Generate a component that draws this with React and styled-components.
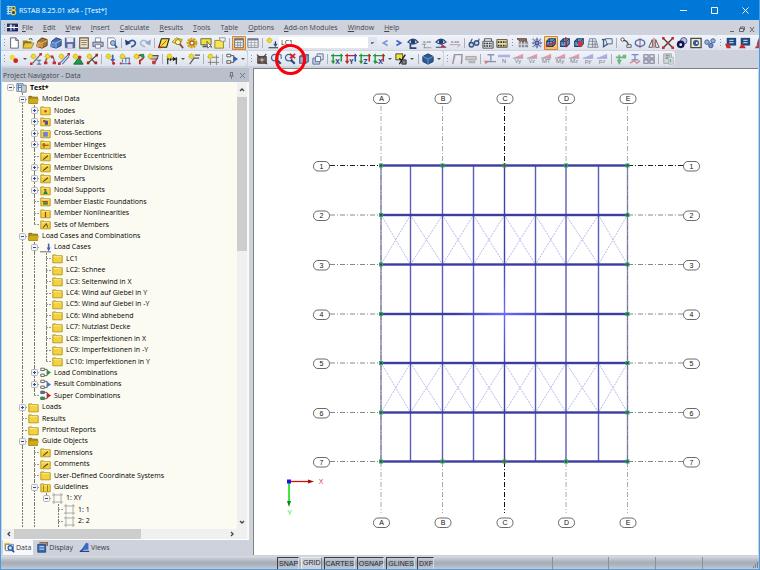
import React, {useState} from 'react'
import styled, { createGlobalStyle } from "styled-components";

const GlobalStyle = createGlobalStyle`
  *{
    padding:0;
    margin:0;
    box-sizing:border-box;
  }
  body{
    font-family:"Open Sans", "Noto Sans", sans-serif;
    font-size:7px;
    color:#1c1c1c;
  }
  button, input, select{
    font:inherit;
    color:inherit;
    border:0;
    background:none;
  }
  svg{
    display:block;
  }
`;

const Frame = styled.div`
  height:100vh;
  display:flex;
  flex-direction:column;
  background:#cdd2dc;
  border:1px solid #4b9be0;
  border-top:0;
  overflow:hidden;
`
const TitleBar = styled.header`
  height:20px;
  flex:none;
  margin:0 -1px;
  padding-left:6px;
  display:flex;
  align-items:center;
  gap:2px;
  background:#0078d7;
  color:#fff;
`
const Title = styled.h1`
  flex:1;
  font-size:7px;
  font-weight:400;
`
const WindowButton = styled.button`
  width:29px;
  height:20px;
  display:flex;
  align-items:center;
  justify-content:center;
`
const MenuBar = styled.nav`
  height:15px;
  flex:none;
  display:flex;
  align-items:center;
  padding-right:2px;
`
const MenuItems = styled.ul`
  flex:1;
  display:flex;
  gap:10px;
  padding-left:4px;
  list-style:none;
`
const MenuButton = styled.button`
  display:block;
  color:#44464e;
  line-height:10px;
`
const MdiButton = styled.button`
  width:10px;
  height:10px;
  display:flex;
  align-items:flex-end;
  justify-content:center;
`
const ToolRow = styled.div`
  height:16px;
  flex:none;
  display:flex;
  gap:${props => props.$gap || 0}px;
`
const ToolStrip = styled.div`
  flex:none;
  height:15px;
  display:flex;
  align-items:center;
  background:linear-gradient(#f1f4fa, #dde2ec);
  border-radius:0 3px 3px 0;
`
const Grip = styled.span`
  width:${props => props.$wide ? 6 : 7}px;
  height:11px;
  background:radial-gradient(circle, #8f96a8 1px, transparent 1px) center / 3px 3px;
  background-repeat:repeat-y;
`
const Separator = styled.span`
  width:1px;
  height:10px;
  margin:0 2px;
  background:#a9afbd;
`
const ToolButton = styled.button`
  position:relative;
  width:14px;
  height:14px;
  display:flex;
  align-items:center;
  justify-content:center;
  border-radius:1px;
  opacity:${props => props.$dim ? 0.65 : 1};
  background:${props => props.$on ? "linear-gradient(#ffd79b, #ffb65c)" : "none"};
  box-shadow:${props => props.$on ? "inset 0 0 0 1px #c78a45" : "none"};
`
const Highlight = styled.span`
  position:absolute;
  z-index:2;
  top:-8px;
  left:-8px;
  width:31px;
  height:31px;
  border:3px solid #fb0007;
  border-radius:50%;
`
const DropButton = styled.button`
  width:8px;
  height:14px;
  display:flex;
  align-items:center;
  justify-content:center;
`
const CaseSelect = styled.select`
  width:98px;
  height:11px;
  margin-right:1px;
  padding-left:2px;
  appearance:none;
  font-size:7px;
  line-height:11px;
  color:#222;
  background:
    conic-gradient(from 315deg at 50% 100%, #777 0 90deg, transparent 0) right 3px center / 4px 2px no-repeat,
    linear-gradient(#dfe4ee, #dfe4ee) right / 9px 11px no-repeat,
    #fff;
`
const Body = styled.main`
  flex:1;
  min-height:0;
  display:flex;
  gap:3px;
`
const Dock = styled.aside`
  width:249px;
  flex:none;
  display:flex;
  flex-direction:column;
`
const DockHeader = styled.div`
  height:14px;
  flex:none;
  margin:1px 1px 0;
  padding:0 2px 0 1px;
  display:flex;
  align-items:center;
  gap:2px;
  background:#b9c0cc;
`
const DockTitle = styled.h2`
  flex:1;
  font-size:7px;
  font-weight:400;
  color:#41434c;
`
const DockButton = styled.button`
  width:9px;
  height:9px;
`
const TreePane = styled.div`
  flex:1;
  min-height:0;
  margin:0 1px;
  display:grid;
  grid-template-columns:minmax(0, 1fr) 10px;
  grid-template-rows:minmax(0, 1fr) 10px;
  padding:0 2px 0 1px;
  background:#fcfbf2;
  border-bottom:1px solid #fff;
`
const Tree = styled.ul`
  display:grid;
  grid-auto-rows:minmax(0, 1fr);
  padding:0 0 2px 1px;
  list-style:none;
  overflow:hidden;
  color:#000;
`
const TreeRow = styled.li`
  display:flex;
  align-items:center;
  white-space:nowrap;
  min-height:0;
`
const dashes = "repeating-linear-gradient(#777 0 2px, transparent 2px 3px)"
const hyphens = "repeating-linear-gradient(90deg, #999 0 2px, transparent 2px 3px)"
const Guide = styled.span`
  width:12px;
  align-self:stretch;
  display:flex;
  align-items:center;
  justify-content:center;
  background:
    ${dashes} 6px 0 / 1px ${props => props.$line} no-repeat,
    ${hyphens} 100% 50% / ${props => props.$branch ? 6 : 0}px 1px no-repeat;
`
const Toggle = styled.button`
  width:7px;
  height:7px;
  margin-left:1px;
  flex:none;
  display:flex;
  align-items:center;
  justify-content:center;
`
const TreeLabel = styled.span`
  padding-left:3px;
  line-height:10px;
  font-weight:${props => props.$strong ? 700 : 400};
`
const ScrollTrack = styled.div`
  display:flex;
  flex-direction:${props => props.$across ? "row" : "column"};
  background:#f0f0f0;
`
const ScrollArrow = styled.button`
  width:${props => props.$across ? 11 : 10}px;
  height:${props => props.$across ? 10 : 15}px;
  flex:none;
  display:flex;
  align-items:center;
  justify-content:center;
`
const ScrollRoom = styled.div`
  flex:1;
  min-height:0;
`
const ScrollThumb = styled.div`
  width:${props => props.$across ? "60%" : "100%"};
  height:${props => props.$across ? "100%" : "37%"};
  background:#cdcdcd;
`
const ScrollCorner = styled.div`
  background:#f0f0f0;
`
const DockTabs = styled.div`
  height:16px;
  flex:none;
  padding:0 0 1px 2px;
  display:flex;
  gap:3px;
`
const DockTab = styled.button`
  height:15px;
  padding:0 2px 0 1px;
  display:flex;
  align-items:center;
  gap:1px;
  color:#383a42;
  background:${props => props.$on ? "#f6f8fb" : "none"};
`
const Viewport = styled.section`
  flex:1;
  min-width:0;
  margin:1px 1px 1px 0;
  background:#fff;
  border-top:1px solid #808080;
  border-left:1px solid #808080;
`
const Drawing = styled.svg`
  width:100%;
  height:100%;
  font-family:"Liberation Sans", sans-serif;
  font-size:7px;
`
const StatusBar = styled.footer`
  height:13px;
  flex:none;
  display:flex;
  justify-content:space-between;
  padding-left:276px;
  background:linear-gradient(#d9dce2, #aab1bb 45%, #a7aeb9 60%, #c4c9d1);
  font-family:"Liberation Sans", sans-serif;
`
const SnapGroup = styled.div`
  display:flex;
  gap:2px;
  padding-top:1px;
`
const SnapButton = styled.button`
  padding:0 0 ${props => props.$on ? 2 : 0}px 1px;
  color:#262b36;
  border:1px solid ${props => props.$on ? "#e9ecf1" : "#3a3d45"};
  border-right-color:${props => props.$on ? "#80858f" : "#d8dce2"};
  border-bottom:0;
  background:${props => props.$on ? "#ccd0d7" : "none"};
`
const StatusCells = styled.div`
  display:flex;
`
const StatusCell = styled.div`
  width:${props => props.$w}px;
  margin-top:1px;
  border-left:1px solid #8b9099;
  display:flex;
  align-items:flex-end;
  justify-content:flex-end;
`

const folder = (
  <>
    <path d="M1 2.500h4l1 1h7v9H1z" fill="#f3d23c" stroke="#a98718" />
    <path d="M2 4.700h10" stroke="#fff3a0" />
  </>
)
const sun = (
  <>
    <path d="M4 0v8M0 4h8M1.500 1.500l5 5M6.500 1.500l-5 5" stroke="#e8d64a" />
    <circle cx="4" cy="4" r="2.500" fill="#f0de25" stroke="#b5a51c" strokeWidth=".6" />
  </>
)
const eye = (
  <>
    <path d="M1 6Q7 -1 13 6Q7 10.500 1 6z" fill="#cfe0f6" stroke="#29446f" strokeWidth="1.300" />
    <circle cx="7" cy="5.500" r="2.600" fill="#1d3c70" />
  </>
)
const bluebox = (
  <>
    <path d="M2 5l3-3h7v6l-3 3H2z" fill="#6d9fd0" stroke="#173d69" strokeWidth="1.300" />
    <path d="M2 5h7v6M9 5l3-3M5 2v6" stroke="#173d69" fill="none" />
  </>
)
const lens = (
  <>
    <circle cx="5.500" cy="5.500" r="3.800" fill="#dce9fa" stroke="#46659c" strokeWidth="1.500" />
    <path d="M8.200 8.200l4.300 4.300" stroke="#2c4478" strokeWidth="2.500" />
  </>
)
const diagram = (name, color) => (
  <>
    <path d="M1 6L13 1v5z" fill={color} />
    <path d="M1 6h12" stroke="#6f75a8" />
    <text x="7" y="12" fontSize="7" textAnchor="middle" fill="#33353f">{name}</text>
  </>
)
const axis = (name, left, right) => (
  <>
    <path d="M2.500 1v9M0 3h14" stroke={left} strokeWidth="1.600" />
    <path d="M12 1v9" stroke={right} strokeWidth="1.800" />
    <path d="M0 9h5l-2.500 4z" fill={left} />
    <text x="7.500" y="12.500" fontSize="8" fontWeight="700" textAnchor="middle" fill="#24427e">{name}</text>
  </>
)
const combo = (color, box) => (
  <>
    <path d="M1 1.500h4.500v3H1zM1 9h4.500v3H1z" fill={box} stroke="#444" />
    <path d="M6 3h3v8H6M9 7h2" fill="none" stroke="#444" />
    <path d="M9 3.500v7l5-3.500z" fill={color} />
  </>
)
const crate = (front, side, light, line) => (
  <>
    <path d="M2 5l5-4 6 2v7l-6 3-6-2z" fill={side} stroke={line} />
    <path d="M2 6l5 1.500V13M7 7l6-3" stroke={light} fill="none" />
    <path d="M1 7h5v5H1z" fill={front} />
  </>
)

const icons = {
  app: (
    <>
      <path d="M1 2h9M1 5h7M1 8h7M1 11h9M3 1v11" stroke="#bcd6ee" strokeWidth="1.600" />
      <circle cx="9.500" cy="4" r="2.200" fill="#0b4d86" stroke="#f7c948" strokeWidth="1.600" />
      <circle cx="9.500" cy="9.500" r="2.800" fill="#0b4d86" stroke="#f7c948" strokeWidth="1.600" />
    </>
  ),
  model: (
    <>
      <path d="M0 2h14v10H0z" fill="#1f2a66" />
      <path d="M0 7h14M5 3v8M9 4v6M3 5h4" stroke="#fff" strokeWidth="1.300" />
    </>
  ),
  page: <path d="M3 1h6l3 3v9H3zM9 1v3h3" fill="#fff" stroke="#555" />,
  open: (
    <>
      <path d="M1 4h5l1 1h4v7H1z" fill="#9a7d16" />
      <path d="M3 7h11l-3 6H1z" fill="#e8c63e" stroke="#77600e" strokeWidth=".7" />
      <path d="M8 3q3-3 4 1" fill="none" stroke="#39853c" strokeWidth="1.300" />
    </>
  ),
  boxBrown: crate("#d99b40", "#a8752f", "#f1c77f", "#4a3316"),
  boxBlue: crate("#5e88d4", "#476fb8", "#b6ccf1", "#1d315e"),
  save: <><path d="M1 1h12v12H2l-1-1z" fill="#56659c" /><path d="M3 1h8v5H3z" fill="#e6eaf4" /><path d="M4 8h6v5H4z" fill="#cfd5e4" /></>,
  report: <><path d="M2 1h10v12H2z" fill="#f1e6cf" stroke="#6a5a42" strokeWidth="1.300" /><path d="M3 4h8M4 6.500h6M4 9h6" stroke="#7b6a53" /></>,
  print: <><path d="M4 1h6v5H4z" fill="#fff" stroke="#8088a0" /><path d="M1 6h12v5H1z" fill="#b2b8ca" stroke="#555c76" /><path d="M4 9h6v4H4z" fill="#fff" stroke="#777e95" /></>,
  preview: <><path d="M2 1h7l2 2v10H2z" fill="#fff" stroke="#777e95" /><circle cx="8" cy="7" r="2.800" fill="#9cc1ec" stroke="#36588f" /><path d="M10 9l3 3.500" stroke="#36588f" strokeWidth="2" /></>,
  undo: <><path d="M4 6q5-4 8 0q1 4-5 5.500" fill="none" stroke="#3b5a96" strokeWidth="2" /><path d="M0 3l1 7 6-3z" fill="#243f78" /></>,
  redo: <><path d="M10 6q-5-4-8 0q-1 4 5 5.500" fill="none" stroke="#a9bbd4" strokeWidth="2" /><path d="M14 3l-1 7-6-3z" fill="#8fa5c3" /></>,
  plane: <><path d="M4 2h9l-3 10H1z" fill="#f4e23a" stroke="#222" strokeWidth="1.300" /><path d="M4 10l6-6" stroke="#c22" /><path d="M0 11h4v2H0z" fill="#c22" /></>,
  find: <><path d="M0 6l5-5 7 2-3 6z" fill="#f4e23a" stroke="#9a851e" /><circle cx="7" cy="6" r="3" fill="#fff6b0" stroke="#7d6b1c" /><path d="M9 8l4 5" stroke="#8d4a37" strokeWidth="2" /></>,
  gear: <><circle cx="7" cy="7" r="5" fill="#f6e13b" stroke="#c4a512" strokeWidth="2.500" strokeDasharray="2.500 1" /><circle cx="7" cy="7" r="2.500" fill="#fff" stroke="#b13a2a" strokeWidth="1.300" /></>,
  screen: <><path d="M1 2h12v7H1z" fill="#f4e23a" stroke="#5c5c4c" /><path d="M8 5l1 8 2-2 3 1z" fill="#fff" stroke="#333" strokeWidth=".8" /><path d="M3 11h5" stroke="#555" strokeWidth="2" /></>,
  note: <><path d="M1 4h10v9H1z" fill="#f6e45a" stroke="#8e7c22" /><path d="M6 1h7v4H8z" fill="#fffbe0" stroke="#8088a0" /></>,
  table: <><path d="M2 1.500h10v11H2z" fill="#f6f7fa" stroke="#555" /><path d="M2 3h10" stroke="#6e7484" strokeWidth="2" /><path d="M3 6.500h8M3 9.500h8M5.500 5v7M8.500 5v7" stroke="#888" /></>,
  grid: <><path d="M1 2h12v10H1z" fill="#fbfbfd" stroke="#6f7484" /><path d="M1 3h12" stroke="#747a90" strokeWidth="2" /><path d="M1 6.500h12M1 9.500h12M5 4v8M9 4v8" stroke="#9aa0ae" /></>,
  load: <>{sun}<path d="M3 12.500h11M11 5v4" stroke="#333" strokeWidth="1.300" /><path d="M8.500 8h5L11 12z" fill="#264fae" /></>,
  prev: <path d="M10 4L5 7l5 3" fill="none" stroke="#7f9ad2" strokeWidth="2" />,
  next: <path d="M4 4l5 3-5 3" fill="none" stroke="#3f68c4" strokeWidth="2" />,
  eyePage: <>{eye}<path d="M4 8v5h7" stroke="#29446f" strokeWidth="2" fill="none" /></>,
  values: <><text x="7" y="7" fontSize="5" textAnchor="middle" fill="#444">x.xx</text><path d="M4 8v5M1 8.500h5M3 12.500h9" stroke="#8b90a0" /></>,
  eyeRed: <>{eye}<path d="M1 12h12" stroke="#4769ad" strokeWidth="1.500" /><path d="M8 8l5 4H7z" fill="#d23232" /></>,
  valuesRed: <><text x="7" y="7" fontSize="5" textAnchor="middle" fill="#444">x.xx</text><path d="M1 9h12l-3 3" stroke="#b89098" fill="none" /></>,
  glasses: <><circle cx="4" cy="9" r="2.600" fill="#c5d8f4" stroke="#39517f" strokeWidth="1.600" /><circle cx="10" cy="7" r="2.600" fill="#c5d8f4" stroke="#39517f" strokeWidth="1.600" /><path d="M2 8l3-6M12 6l1-4" stroke="#39517f" strokeWidth="1.300" /></>,
  calc: <><path d="M1 5h12v8H1z" fill="#e0e2ea" stroke="#444" /><path d="M3 5V2h8v3" stroke="#444" fill="none" /><path d="M2 7.500h10M2 10.500h10" stroke="#333" strokeWidth="1.800" strokeDasharray="2 1" /></>,
  calcAll: <><path d="M1 3h12v9H1z" fill="#efe19a" stroke="#444" /><path d="M2 6h10M2 10h10" stroke="#333" strokeWidth="2" strokeDasharray="2 1" /></>,
  hand: <><path d="M2 5h11v7H2z" fill="#88909e" /><path d="M0 2h11v3H4z" fill="#a47350" stroke="#4b382c" /><path d="M2 8.500h11M5 5v8M9 5v8" stroke="#e6e8ee" /></>,
  snap: <><path d="M1 3h12M1 11h12M3 1v12M11 1v12" stroke="#777e95" strokeDasharray="1 1" /><path d="M7 1v12M1 7h12M4 4l6 6M10 4l-6 6" stroke="#3a469c" strokeWidth="1.300" /><circle cx="7" cy="7" r="1.500" fill="#fff" stroke="#23329a" /></>,
  view1: <>{bluebox}<path d="M1 11l11-5" stroke="#c22" strokeWidth="1.800" /></>,
  view2: <>{bluebox}<path d="M8 0v12" stroke="#c22" strokeWidth="1.500" /></>,
  view3: <>{bluebox}<path d="M6 5h5v6H6z" fill="#d6303a" /></>,
  mesh: <><path d="M3 2h7l3 10H1zM2 5h9M2 8.500h10M6.500 2v10" fill="none" stroke="#6c8599" /><path d="M9.500 6v6" stroke="#b75a5a" /></>,
  bubble: <><path d="M5 2h8v6H7z" fill="#e3edf8" stroke="#44597f" /><path d="M3 2v10M2 12l6-4M1 3h4" stroke="#44597f" strokeWidth="1.500" /></>,
  nodesMove: <><circle cx="3" cy="3" r="2" fill="#fff" stroke="#444" /><path d="M4 4q5 0 6 6" stroke="#444" fill="none" strokeWidth="1.300" /><path d="M8 9h5v3H8z" fill="#fff" stroke="#444" /></>,
  rotate: <><ellipse cx="7" cy="7" rx="5.500" ry="4" fill="none" stroke="#3c6fc2" strokeWidth="1.600" /><path d="M7 1v12" stroke="#c0392b" /></>,
  mirror: <><path d="M5 3v9H1zM9 3v9h4z" fill="#fff" stroke="#444" /><path d="M7 1v12" stroke="#c33" /></>,
  cross: <><path d="M2 2l10 10M12 2L2 12" stroke="#3a3a3a" strokeWidth="1.500" /><path d="M0 0h3v3H0zM11 0h3v3h-3zM0 11h3v3H0zM11 11h3v3h-3zM5.500 5.500h3v3h-3z" fill="#cf2929" /></>,
  spheres: <><circle cx="9" cy="4.500" r="3.800" fill="#b9c0e0" stroke="#414f8a" /><circle cx="5.500" cy="8.500" r="4.500" fill="#11194e" /><circle cx="5.500" cy="9" r="1.600" fill="#eef" /></>,
  photo: <><path d="M1 1.500h12v11H1z" fill="#f0e9c8" stroke="#4b4b4b" strokeWidth="1.500" /><circle cx="7" cy="7" r="3.500" fill="#32579c" /><circle cx="8" cy="7" r="1.200" fill="#fff" /></>,
  cluster: <><circle cx="3.500" cy="6" r="2.600" fill="#9cb5dd" stroke="#36548c" /><circle cx="10.500" cy="4.500" r="2.500" fill="#9cb5dd" stroke="#36548c" /><circle cx="8" cy="10" r="2.600" fill="#6f90c8" stroke="#36548c" /></>,
  module: <><path d="M2 1h11v9H2z" fill="#1d4b80" /><path d="M5 4h5M5 6.500h5" stroke="#bcd" strokeWidth="1.300" /><path d="M0 8h5l2 5H2z" fill="#cc2a2a" /></>,
  module2: <><path d="M2 1h11v9H2z" fill="#1d4b80" /><path d="M5 4h5M5 6.500h5" stroke="#bcd" strokeWidth="1.300" /><path d="M0 13l4-6 4 6z" fill="#cc2a2a" /></>,
  drop: <path d="M7 1q5 7 0 9t0-9zM5 9h7v4H2z" fill="#c33a3a" />,
  node: <><circle cx="5" cy="5" r="3" fill="#f0d92c" /><circle cx="9" cy="9" r="2.800" fill="#d32121" /></>,
  member: <>{sun}<path d="M3 12L12 2" stroke="#59617a" strokeWidth="1.300" /><path d="M11 0h3v3h-3zM0 11h3v3H0z" fill="#cf2929" /><path d="M8 8.500h5M10.500 9v4M8 13h5" stroke="#354d91" /></>,
  arc: <><path d="M2 11q0-6 5-7t5 7" fill="none" stroke="#59617a" strokeWidth="1.500" />{sun}<path d="M0 10h4v3H0zM10 10h4v3h-4zM8 3h3v3H8z" fill="#cf2929" /></>,
  line: <>{sun}<path d="M2 12L12 2M5 13l8-9" stroke="#5d73b0" strokeWidth="1.300" /><path d="M11 0h3v3h-3zM0 11h3v3H0z" fill="#cf2929" /></>,
  support: <><path d="M8 5l5 8H2z" fill="#1f9a48" stroke="#11602b" />{sun}<circle cx="9" cy="5" r="2" fill="#d32121" /></>,
  hinge: <><path d="M2 12l10-9M4 4l7 8" stroke="#444" strokeWidth="1.300" />{sun}<path d="M10 10h3v3h-3zM11 1h3v3h-3zM1 10h3v3H1z" fill="#a22" /></>,
  loadNode: <>{sun}<path d="M9 2v7" stroke="#4464b0" strokeWidth="2" /><path d="M6 7h6l-3 4z" fill="#4464b0" /><circle cx="10" cy="12" r="1.800" fill="#d32121" /></>,
  loadLine: <><path d="M2 6h11M4 6v5M8 6v5M12 6v5M1 12.500h13" stroke="#3a59a5" />{sun}<path d="M1 11h2v2H1zM11 11h2v2h-2z" fill="#cf2929" /></>,
  loadTemp: <><path d="M6 6q1-5 5-3t-3 6v4" fill="none" stroke="#b72020" strokeWidth="2" />{sun}<path d="M9 1h4v4H9z" fill="#1f9a48" /></>,
  loadFree: <><path d="M3 3h10l-1 4H4zM12 6L8 13" fill="#c0c8dc" stroke="#6a4a50" strokeWidth="1.300" />{sun}<path d="M6 9h4v4H6z" fill="#c33" /></>,
  dimension: <><path d="M1 7h12M2 5v8M12 5v8" stroke="#222" strokeWidth="1.300" /><path d="M2 7l4-2.500v5zM12 7L8 4.500v5z" fill="#222" />{sun}</>,
  comment: <>{sun}<path d="M2 13l5-7h6M8 2.500h6" stroke="#555" strokeWidth="1.300" fill="none" /></>,
  frameGrid: <><path d="M4 2v12M11 2v12M1 5h13M1 11h13" stroke="#777" />{sun}</>,
  combo: combo("#2b62c9", "#fff"),
  shot: <><path d="M2 4h10v8H2z" fill="#7d5f55" stroke="#333" /><path d="M1 2l12 11M12 1L3 12" stroke="#444" strokeWidth="1.300" /><circle cx="7" cy="8" r="2" fill="#caa" /></>,
  zoomAll: <>{lens}<path d="M8 2h5v5" stroke="#444" fill="none" /></>,
  zoomOut: <>{lens}<path d="M7 1l6 5M13 1L7 6" stroke="#d02020" strokeWidth="2" /></>,
  block: <><path d="M2 4l3-2h7v8l-3 2H2z" fill="#9baed0" stroke="#4a5d86" strokeWidth="1.300" /><path d="M2 4h7v8M9 4l3-2" stroke="#4a5d86" fill="none" /></>,
  blocks: <><path d="M6 1h7v7H6z" fill="#dfe6f3" stroke="#5a6988" /><path d="M1 6h8v7H1z" fill="#bac8e2" stroke="#5a6988" /><path d="M4 4h6v6H4z" fill="#eef2f9" stroke="#5a6988" /></>,
  viewX: axis("X", "#1d9a35", "#1d9a35"),
  viewY: axis("Y", "#c22222", "#2d4fb8"),
  viewZ: axis("Z", "#1d9a35", "#c22222"),
  viewNX: axis("-X", "#1d9a35", "#c22222"),
  palette: <><path d="M1 1h8v7H1z" fill="#f3e23c" stroke="#333" /><path d="M5 6l5 5M12 2L5 13" stroke="#222" strokeWidth="1.600" /><path d="M8 8h5v5H8z" fill="#7a7f90" stroke="#222" /></>,
  solid: <><path d="M1 4l6-3 6 3v6l-6 3-6-3z" fill="#2b5c96" stroke="#143055" /><path d="M1 4l6 3 6-3M7 7v6" stroke="#7ba4d3" fill="none" /></>,
  bending: <><path d="M2 13L4 2h9l-1 11" fill="none" stroke="#5d6880" strokeWidth="1.500" /><path d="M2 12L5 3M12 3l1 8" stroke="#c55" /></>,
  stress: <><path d="M1 4h12v4H1z" fill="#c3b3ad" stroke="#777" /><path d="M4 9h8v3H4z" fill="#999" /></>,
  deform: <><path d="M4 2h8M8 2v8M3 10h11" stroke="#5a6490" strokeWidth="1.600" /><path d="M0 9h6l-4 4z" fill="#c44" /></>,
  rN: <><path d="M0 2h14v3H0z" fill="#8e8ee0" /><text x="7" y="12" fontSize="7" textAnchor="middle" fill="#33353f">N</text></>,
  rVy: diagram("Vy", "#e37070"),
  rVz: diagram("Vz", "#e37070"),
  rMT: diagram("MT", "#e37070"),
  rMy: diagram("My", "#e37070"),
  rMz: diagram("Mz", "#e37070"),
  rpy: diagram("py", "#8e8ee0"),
  rpz: diagram("pz", "#8e8ee0"),
  plant: <><path d="M5 2v11M1 5h12" stroke="#2b9940" strokeWidth="2" /><path d="M2 8l3 5 3-5zM9 2h4v4H9z" fill="#2b9940" /></>,
  section: <><path d="M3 2h8M7 2v6M3 8h8" stroke="#3b55b0" strokeWidth="1.500" /><path d="M1 12l5-3 3 3 4-3" stroke="#c44" fill="none" strokeWidth="1.300" /></>,
  windows: <path d="M1 2h5v4H1zM8 2h5v4H8zM1 8h5v4H1zM8 8h5v4H8z" fill="#e0e0ea" stroke="#45496a" strokeWidth="1.300" />,
  legend: <><path d="M2 1h9v11H2z" fill="#c9ced8" stroke="#777" /><path d="M4 3h5M4 6h3" stroke="#3f7f55" strokeWidth="2" /><path d="M8 5h5v8H8z" fill="#e6e9ef" stroke="#888" /><path d="M9 7h2v4H9z" fill="#4b9a62" /></>,
  root: <><path d="M1 2h8v10H1z" fill="#e8eef6" stroke="#5a7190" /><path d="M2 4h5M2 7h5M3 3v8" stroke="#4b76ad" strokeWidth="1.300" /><path d="M7 4h6v9H7z" fill="#c3cbd8" stroke="#66758b" /></>,
  open2: <><path d="M1 3h4l1 1h6v8H1z" fill="#a98a14" stroke="#77600e" /><path d="M2 6h12l-2 6H1z" fill="#cfab1c" /></>,
  folder,
  fNode: <>{folder}<circle cx="7" cy="8" r="1.500" fill="#d33a1a" /></>,
  fMaterial: <>{folder}<path d="M4 5h3v3H4z" fill="#c33" /><path d="M7 6h3v5H6z" fill="#2d4f9c" /></>,
  fSection: <>{folder}<path d="M4 5h6v6H4z" fill="#6b82dc" /></>,
  fHinge: <>{folder}<path d="M5 5v6M5 8h6" stroke="#6f4a10" strokeWidth="1.300" /><path d="M3 6h3v3H3z" fill="#d9531a" /></>,
  fLine: <>{folder}<path d="M4 11l6-5" stroke="#5c3f0c" strokeWidth="1.500" /></>,
  fSupport: <>{folder}<path d="M7 6l3 5.500H4z" fill="#128a3d" /><path d="M5 5h3v2H5z" fill="#c33" /></>,
  fElastic: <>{folder}<path d="M3 7h7" stroke="#c33" strokeWidth="1.500" /><path d="M4 8h6v3H4z" fill="#37853c" /></>,
  fBars: <>{folder}<path d="M7 5v7" stroke="#a33c10" strokeWidth="1.600" /></>,
  fSet: <>{folder}<path d="M4 11l4-5 2 5" stroke="#6d4c10" strokeWidth="1.300" fill="none" /></>,
  fGrid: <>{folder}<path d="M4.500 4v8M9.500 4v8" stroke="#8a6a10" /></>,
  loadCase: <><path d="M0 12.500h14" stroke="#444" /><path d="M11 2v6" stroke="#3c62c4" strokeWidth="2" /><path d="M8.500 7h5L11 12z" fill="#3c62c4" /></>,
  comboGreen: combo("#1d9a35", "#fff"),
  comboBlue: combo("#3c72d9", "#fff"),
  comboRed: (
    <>
      {combo("#d11a1a", "#3f7fd6")}
      <path d="M1 9h4.500v3H1z" fill="#2a9a48" />
    </>
  ),
  guideline: <path d="M2.500 0v14M11.500 0v14M0 2.500h14M0 11.500h14" stroke="#999" />,
  tabData: <><path d="M0 1h8v9H0z" fill="#f2d23a" /><path d="M2 3h10v8H2z" fill="#fff" stroke="#4a6fae" /><circle cx="8" cy="7.500" r="2.800" fill="#cfe2fa" stroke="#24509c" strokeWidth="1.500" /><path d="M10 10l3 3" stroke="#24509c" strokeWidth="2" /></>,
  tabDisplay: <><path d="M1 3h10v10H1z" fill="#3c6ab2" stroke="#1b3c74" /><path d="M3 6h6M3 9h6" stroke="#fff" /><path d="M3 1h10v4" fill="none" stroke="#8a6a4a" strokeWidth="2" /></>,
  tabViews: <><path d="M9 1l3 1v8H3z" fill="#3c69c8" /><path d="M1 12h12M6 9l-5 3" stroke="#23448c" strokeWidth="1.500" /></>,
}

const Icon = ({name, size = 12}) => (
  <svg width={size} height={size} viewBox="0 0 14 14" aria-hidden="true">{icons[name]}</svg>
)

const menus = [["", "F", "ile"], ["", "E", "dit"], ["", "V", "iew"], ["", "I", "nsert"], ["", "C", "alculate"], ["", "R", "esults"], ["", "T", "ools"], ["T", "a", "ble"], ["", "O", "ptions"], ["", "A", "dd-on Modules"], ["", "W", "indow"], ["", "H", "elp"]]

// "|" is a separator, "v" a drop-down arrow, * is switched on, ! is ringed
const fileTools = "page open boxBrown boxBlue save report print preview | undo redo | plane find gear screen note | table* grid | load select prev next eyePage values eyeRed valuesRed | glasses calc calcAll"
const viewTools = "hand snap view1* view2 view3 mesh bubble | nodesMove rotate mirror cross spheres photo cluster"
const moduleTools = "module module2 drop"
const insertTools = "node v member arc line support hinge | loadNode loadLine loadTemp loadFree | dimension v comment | frameGrid | combo v"
const zoomTools = "shot zoomAll zoomOut! block blocks | viewX viewY viewZ viewNX v palette v | solid v"
const resultTools = "bending stress | deform rN rVy rVz rMT rMy rMz rpy rpz | plant section windows | legend"

const item = (label, icon, children, more) => ({label, icon, children, more})
const loadCases = ["LC1", "LC2: Schnee", "LC3: Seitenwind in X", "LC4: Wind auf Giebel in Y", "LC5: Wind auf Giebel in -Y", "LC6: Wind abhebend", "LC7: Nutzlast Decke", "LC8: Imperfektionen in X", "LC9: Imperfektionen in -Y", "LC10: Imperfektionen in Y"]

// children: an array when open, "+" when closed, nothing for a leaf
const project = item("Test*", "root", [
  item("Model Data", "open2", [
    item("Nodes", "fNode", "+"),
    item("Materials", "fMaterial", "+"),
    item("Cross-Sections", "fSection", "+"),
    item("Member Hinges", "fHinge", "+"),
    item("Member Eccentricities", "fLine"),
    item("Member Divisions", "fLine", "+"),
    item("Members", "fLine", "+"),
    item("Nodal Supports", "fSupport", "+"),
    item("Member Elastic Foundations", "fElastic"),
    item("Member Nonlinearities", "fBars"),
    item("Sets of Members", "fSet"),
  ]),
  item("Load Cases and Combinations", "open2", [
    item("Load Cases", "loadCase", loadCases.map(name => item(name, "folder"))),
    item("Load Combinations", "comboGreen", "+"),
    item("Result Combinations", "comboBlue", "+"),
    item("Super Combinations", "comboRed"),
  ]),
  item("Loads", "folder", "+"),
  item("Results", "folder"),
  item("Printout Reports", "folder"),
  item("Guide Objects", "open2", [
    item("Dimensions", "fLine"),
    item("Comments", "fLine"),
    item("User-Defined Coordinate Systems", "folder"),
    item("Guidelines", "fGrid", [
      item("1: XY", "guideline", [
        item("1: 1", "guideline"),
        item("2: 2", "guideline", null, true),
      ]),
    ], true),
  ], true),
])

const flatten = (node, trail = [], last = true) => {
  const rows = [{...node, trail, last, depth: trail.length}]
  if (Array.isArray(node.children)) {
    node.children.forEach((child, i) => {
      const isLast = i === node.children.length - 1 && !child.more
      rows.push(...flatten(child, [...trail, !last], isLast))
    })
  }
  return rows
}

const Tools = ({list}) => list.split(" ").map((entry, i) => {
  if (entry === "|") return <Separator key={i} />
  if (entry === "v") return (
    <DropButton key={i} aria-label="More">
      <svg width="4" height="2" viewBox="0 0 4 2"><path d="M0 0h4L2 2z" fill="#555" /></svg>
    </DropButton>
  )
  if (entry === "select") return (
    <CaseSelect key={i} aria-label="Load case" defaultValue="LC1">
      <option>LC1</option>
    </CaseSelect>
  )
  const name = entry.replace(/[*!]/, "")
  return (
    <ToolButton key={i} aria-label={name} $on={entry.endsWith("*")} $dim={list === resultTools}>
      <Icon name={name} />
      {entry.endsWith("!") && <Highlight />}
    </ToolButton>
  )
})

const Arrow = ({d}) => (
  <svg width="6" height="6" viewBox="0 0 6 6"><path d={d} fill="none" stroke="#444" strokeWidth="1.300" /></svg>
)

const Navigator = () => {
  const [tab, setTab] = useState("Data")
  return (
    <Dock>
      <DockHeader>
        <DockTitle>Project Navigator - Data</DockTitle>
        <DockButton aria-label="Pin">
          <svg width="9" height="9" viewBox="0 0 9 9"><path d="M3 1.500h3M3.500 1v4M5.500 1v4M2 5h5M4.500 5v3" stroke="#73788a" fill="none" /></svg>
        </DockButton>
        <DockButton aria-label="Close">
          <svg width="9" height="9" viewBox="0 0 9 9"><path d="M2 2l5 5M7 2L2 7" stroke="#73788a" /></svg>
        </DockButton>
      </DockHeader>
      <TreePane>
        <Tree>
          {flatten(project).map((row, i) => (
            <TreeRow key={i}>
              {row.trail.map((open, k) => <Guide key={k} $line={open ? "100%" : "0"} />)}
              <Guide $branch $line={row.depth === 0 ? "0" : row.last ? "50%" : "100%"}>
                {row.children && (
                  <Toggle aria-label={row.label}>
                    <svg width="7" height="7" viewBox="0 0 7 7">
                      <rect x=".5" y=".5" width="6" height="6" rx="1" fill="#f4f4f4" stroke="#b4b6bc" />
                      <path d={row.children === "+" ? "M2 3.500h3M3.500 2v3" : "M2 3.500h3"} stroke="#2f4a9a" />
                    </svg>
                  </Toggle>
                )}
              </Guide>
              <Icon name={row.icon} size={11} />
              <TreeLabel $strong={row.depth === 0}>{row.label}</TreeLabel>
            </TreeRow>
          ))}
        </Tree>
        <ScrollTrack>
          <ScrollArrow aria-label="Up"><Arrow d="M1 4l2-2 2 2" /></ScrollArrow>
          <ScrollRoom><ScrollThumb /></ScrollRoom>
          <ScrollArrow aria-label="Down"><Arrow d="M1 2l2 2 2-2" /></ScrollArrow>
        </ScrollTrack>
        <ScrollTrack $across>
          <ScrollArrow $across aria-label="Left"><Arrow d="M4 1L2 3l2 2" /></ScrollArrow>
          <ScrollRoom><ScrollThumb $across /></ScrollRoom>
          <ScrollArrow $across aria-label="Right"><Arrow d="M2 1l2 2-2 2" /></ScrollArrow>
        </ScrollTrack>
        <ScrollCorner />
      </TreePane>
      <DockTabs>
        {["Data", "Display", "Views"].map(name => (
          <DockTab key={name} $on={tab === name} onClick={() => setTab(name)}>
            <Icon name={"tab" + name} size={11} />{name}
          </DockTab>
        ))}
      </DockTabs>
    </Dock>
  )
}

const columns = [{name: "A", x: 381}, {name: "B", x: 442.5}, {name: "C", x: 504.5}, {name: "D", x: 566}, {name: "E", x: 627.5}]
const lines = [165.5, 215, 264.5, 314, 363, 412.5, 461.5]
const bars = [381, 410.5, 442.5, 473.5, 504.5, 535.5, 566, 598.5, 627.5]

const Tag = ({x, y, children}) => (
  <>
    <rect x={x - 7.5} y={y - 4.5} width="16" height="9.500" rx="4.500" fill="#fff" stroke="#444" strokeWidth=".8" />
    <text x={x + 0.5} y={y + 2.5} textAnchor="middle" fill="#111">{children}</text>
  </>
)

const Plan = () => (
  <Drawing viewBox="254 69 504 486">
    <defs>
      <linearGradient id="glow" gradientUnits="userSpaceOnUse" x1="381" y1="0" x2="628" y2="0">
        <stop offset=".3" stopColor="#3d3da0" />
        <stop offset=".5" stopColor="#6a6aff" />
        <stop offset=".7" stopColor="#3d3da0" />
      </linearGradient>
      <linearGradient id="glowDown" gradientUnits="userSpaceOnUse" x1="0" y1="165" x2="0" y2="462">
        <stop offset=".3" stopColor="#4040a8" />
        <stop offset=".5" stopColor="#6a6aff" />
        <stop offset=".7" stopColor="#4040a8" />
      </linearGradient>
    </defs>
    {columns.map(c => (
      <g key={c.name}>
        <path d={`M${c.x} 106V165M${c.x} 462V513`} stroke={c.name === "C" ? "#111" : "#aaa"} strokeDasharray="5 2 1 2" />
        <Tag x={c.x} y={98.5}>{c.name}</Tag>
        <Tag x={c.x} y={522.5}>{c.name}</Tag>
      </g>
    ))}
    {lines.map((y, i) => (
      <g key={y}>
        <path d={`M330 ${y}H381M628 ${y}H683`} stroke={i === 0 ? "#222" : "#888"} strokeDasharray="5 2 1 2" />
        <Tag x={321} y={y + 0.5}>{i + 1}</Tag>
        <Tag x={691} y={y + 0.5}>{i + 1}</Tag>
      </g>
    ))}
    {[1, 4].map(r => bars.slice(1).map((x, i) => (
      <path key={r + "-" + x} d={`M${bars[i]} ${lines[r]}L${x} ${lines[r + 1]}M${x} ${lines[r]}L${bars[i]} ${lines[r + 1]}`} stroke="#a6a6e8" strokeWidth=".8" strokeDasharray="2 1" />
    )))}
    {bars.map((x, i) => (
      <rect key={x} x={x - 0.7} y="165" width="1.400" height="297" fill={i === 4 ? "url(#glowDown)" : i === 0 || i === 8 ? "#8c8cc4" : "#5c5cba"} />
    ))}
    <path d="M381 165V462M627.500 165V462" stroke="#666" strokeWidth=".6" strokeDasharray="5 2 1 2" />
    {lines.map((y, i) => (
      <rect key={y} x="381" y={y - 1.2} width="247" height="2.400" fill={i === 3 ? "url(#glow)" : "#3d3da0"} />
    ))}
    {lines.map((y, i) => (i === 0 || i === 6 ? columns : [columns[0], columns[4]]).map(c => (
      <g key={c.name + y}>
        <rect x={c.x - 2} y={y - 2} width="4" height="4" fill="#35a85a" />
        <rect x={c.x - 1} y={y - 1} width="2" height="2" fill={c.name === "C" ? "#8b2d3d" : "#1f4f6c"} />
      </g>
    )))}
    <path d="M289 481.500h20" stroke="#d01010" strokeWidth="1.300" />
    <path d="M308 479.500l6 2-6 2z" fill="#b00808" />
    <path d="M289 482v21" stroke="#00e000" strokeWidth="1.500" />
    <path d="M287 501h4l-2 6z" fill="#008a10" />
    <rect x="287" y="479.500" width="4" height="4" fill="#1717e8" />
    <text x="321" y="484" textAnchor="middle" fill="#f03030">X</text>
    <text x="289.500" y="515" textAnchor="middle" fill="#30e030">Y</text>
  </Drawing>
)

const App = () => (
  <>
    <GlobalStyle />
    <Frame>
      <TitleBar>
        <Icon name="app" size={11} />
        <Title>RSTAB 8.25.01 x64 - [Test*]</Title>
        <WindowButton aria-label="Minimize"><svg width="7" height="7" viewBox="0 0 7 7"><path d="M0 3.500h7" stroke="#fff" /></svg></WindowButton>
        <WindowButton aria-label="Maximize"><svg width="7" height="7" viewBox="0 0 7 7"><path d="M.5 .5h6v6h-6z" fill="none" stroke="#fff" /></svg></WindowButton>
        <WindowButton aria-label="Close"><svg width="7" height="7" viewBox="0 0 7 7"><path d="M.5 .5l6 6M6.500 .5l-6 6" stroke="#fff" /></svg></WindowButton>
      </TitleBar>
      <MenuBar>
        <Grip $wide />
        <Icon name="model" size={11} />
        <MenuItems>
          {menus.map(([before, key, after]) => (
            <li key={key + after}><MenuButton>{before}<u>{key}</u>{after}</MenuButton></li>
          ))}
        </MenuItems>
        <MdiButton aria-label="Minimize document"><svg width="6" height="8" viewBox="0 0 6 8"><path d="M1 6.500h4" stroke="#666" /></svg></MdiButton>
        <MdiButton aria-label="Restore document"><svg width="6" height="8" viewBox="0 0 6 8"><path d="M1.500 3V2h4v3h-1M.5 3.500h4v3h-4z" fill="none" stroke="#666" /></svg></MdiButton>
        <MdiButton aria-label="Close document"><svg width="6" height="8" viewBox="0 0 6 8"><path d="M1 2l4 5M5 2L1 7" stroke="#666" /></svg></MdiButton>
      </MenuBar>
      <ToolRow>
        <ToolStrip><Grip $wide /><Tools list={fileTools} /></ToolStrip>
        <ToolStrip><Grip /><Tools list={viewTools} /></ToolStrip>
        <ToolStrip><Grip /><Tools list={moduleTools} /></ToolStrip>
      </ToolRow>
      <ToolRow $gap={1}>
        <ToolStrip><Grip $wide /><Tools list={insertTools} /></ToolStrip>
        <ToolStrip><Grip /><Tools list={zoomTools} /></ToolStrip>
        <ToolStrip><Grip $wide /><Tools list={resultTools} /></ToolStrip>
      </ToolRow>
      <Body>
        <Navigator />
        <Viewport><Plan /></Viewport>
      </Body>
      <StatusBar>
        <SnapGroup>
          {["SNAP", "GRID", "CARTES", "OSNAP", "GLINES", "DXF"].map(name => (
            <SnapButton key={name} $on={name === "GRID"}>{name}</SnapButton>
          ))}
        </SnapGroup>
        <StatusCells>
          <StatusCell $w={56} />
          <StatusCell $w={47} />
          <StatusCell $w={47} />
          <StatusCell $w={57}>
            <svg width="7" height="7" viewBox="0 0 7 7"><path d="M5 1h1M3 3h1M5 3h1M1 5h1M3 5h1M5 5h1" stroke="#6b707a" strokeWidth="1.300" /></svg>
          </StatusCell>
        </StatusCells>
      </StatusBar>
    </Frame>
  </>
)

export default App
